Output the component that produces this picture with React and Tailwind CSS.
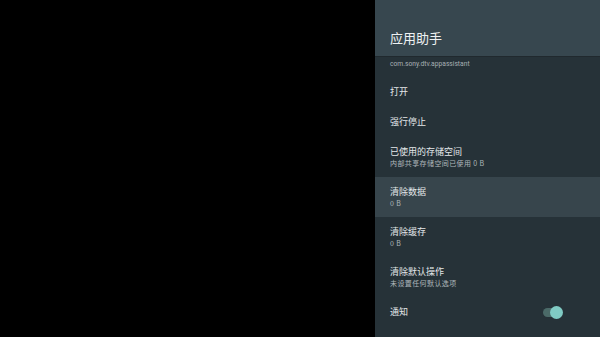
const font = { fontFamily: '"Noto Sans CJK SC", Roboto, "Noto Sans", sans-serif' };

const Row = ({ title, subtitle, active }) => (
  <div className={`h-[40px] pl-[15px] pt-[8px] ${active ? 'bg-[#37454c]' : ''}`}>
    <div className="text-[9px] leading-[13px] text-[#e4e8ea]">{title}</div>
    <div className="text-[7px] leading-[11px] tracking-[0.4px] text-[#aeb7bb]">{subtitle}</div>
  </div>
);

const Toggle = () => (
  <div className="relative w-[20px] h-[13px]">
    <div className="absolute left-0 top-[2px] w-[16px] h-[9px] rounded-full bg-[#4b6a68]" />
    <div className="absolute right-0 top-0 w-[13px] h-[13px] rounded-full bg-[#80cbc4]" />
  </div>
);

export default function App() {
  return (
    <div className="w-[600px] h-[337px] flex overflow-hidden" style={font}>
      <div className="w-[375px] h-full bg-black" />
      <div className="flex-1 h-full flex flex-col bg-[#263238]">
        <div className="h-[57px] pl-[15px] pt-[29px] bg-[#37474f] border-b border-[#20292e]">
          <div className="text-[13px] leading-[18px] text-[#eef1f2]">应用助手</div>
        </div>
        <div className="h-[19px] pl-[15px] pt-[2px]">
          <div className="text-[6.7px] leading-[10px] text-[#a6b0b4]" style={{ fontFamily: 'Roboto, sans-serif' }}>
            com.sony.dtv.appassistant
          </div>
        </div>
        <div className="h-[31px] pl-[15px] flex items-center text-[9px] text-[#e4e8ea]">打开</div>
        <div className="h-[30px] pl-[15px] flex items-center text-[9px] text-[#e4e8ea]">强行停止</div>
        <Row title="已使用的存储空间" subtitle="内部共享存储空间已使用 0 B" />
        <Row title="清除数据" subtitle="0 B" active />
        <Row title="清除缓存" subtitle="0 B" />
        <Row title="清除默认操作" subtitle="未设置任何默认选项" />
        <div className="h-[40px] pl-[15px] pr-[37px] pt-[8px] flex justify-between items-start">
          <div className="text-[9px] leading-[13px] text-[#e4e8ea]">通知</div>
          <div className="pt-[1px]">
            <Toggle />
          </div>
        </div>
      </div>
    </div>
  );
}
